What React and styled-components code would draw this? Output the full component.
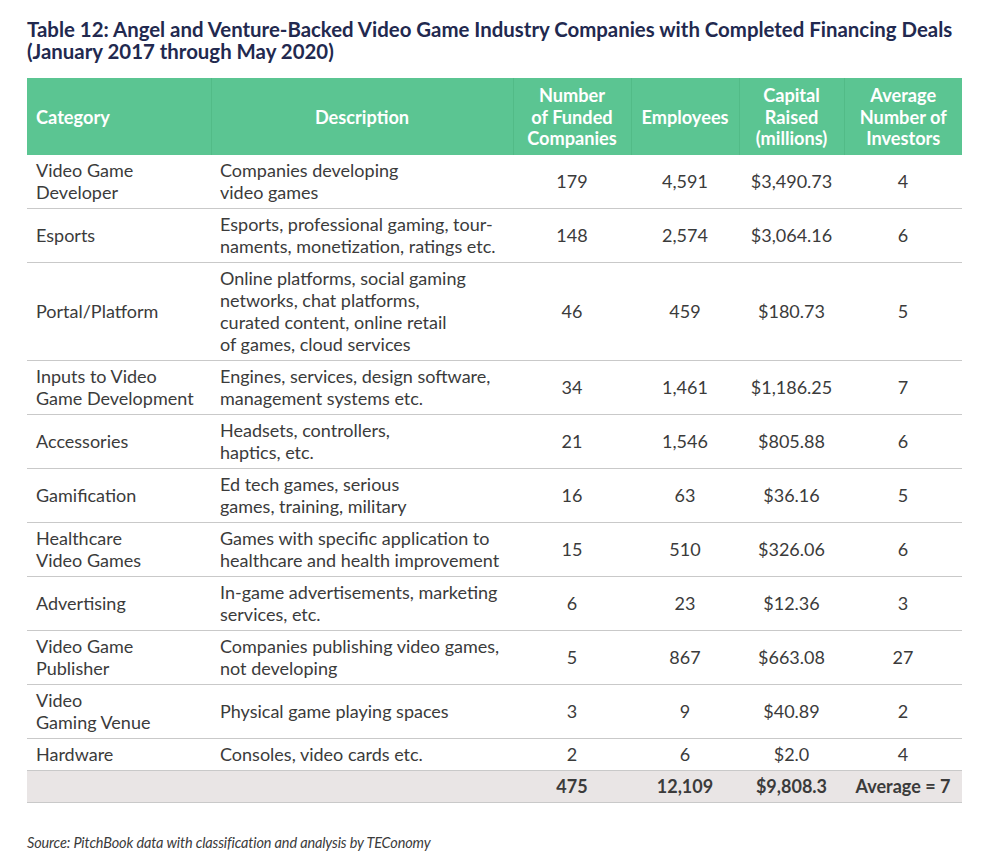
import React from "react";
import styled, { createGlobalStyle } from "styled-components";

const Global = createGlobalStyle`
  html, body { margin: 0; padding: 0; background: #ffffff; }
  body { font-family: Lato, "Open Sans", sans-serif; }
`;

const Page = styled.div`
  width: 1008px;
  height: 862px;
  box-sizing: border-box;
  padding: 18px 0 0 27px;
  background: #fff;
`;

const Title = styled.h1`
  margin: 0;
  font-family: Lato, sans-serif;
  font-weight: 700;
  font-size: 20.4px;
  line-height: 22px;
  color: #22294f;
`;

const Table = styled.table`
  margin-top: 16px;
  width: 935px;
  border-collapse: collapse;
  table-layout: fixed;
  font-family: Lato, sans-serif;
`;

const HeadCell = styled.th`
  background: #5bc592;
  color: #ffffff;
  font-weight: 700;
  font-size: 18.2px;
  line-height: 21.5px;
  padding: 7px 9px 5px;
  height: 76px;
  box-sizing: border-box;
  text-align: ${(p) => p.$align || "center"};
  border-left: ${(p) => (p.$first ? "none" : "1px solid #52bb87")};
  vertical-align: middle;
  white-space: nowrap;
`;

const Row = styled.tr`
  border-bottom: 1px solid #c9c9c9;
  background: ${(p) => (p.$total ? "#e9e5e5" : "#fff")};
`;

const Cell = styled.td`
  font-size: 18px;
  line-height: 22px;
  color: #3b3b3b;
  padding: 4.5px 9px;
  font-weight: ${(p) => (p.$bold ? 700 : 400)};
  text-align: ${(p) => (p.$center ? "center" : "left")};
  vertical-align: middle;
  white-space: nowrap;
`;

const Source = styled.p`
  margin: 31px 0 0 0;
  font-family: Lato, sans-serif;
  font-style: italic;
  font-size: 14.5px;
  color: #3b3b3b;
  letter-spacing: -0.15px;
`;

const rows = [
  [["Video Game", "Developer"], ["Companies developing", "video games"], "179", "4,591", "$3,490.73", "4"],
  [["Esports"], ["Esports, professional gaming, tour-", "naments, monetization, ratings etc."], "148", "2,574", "$3,064.16", "6"],
  [["Portal/Platform"], ["Online platforms, social gaming", "networks, chat platforms,", "curated content, online retail", "of games, cloud services"], "46", "459", "$180.73", "5"],
  [["Inputs to Video", "Game Development"], ["Engines, services, design software,", "management systems etc."], "34", "1,461", "$1,186.25", "7"],
  [["Accessories"], ["Headsets, controllers,", "haptics, etc."], "21", "1,546", "$805.88", "6"],
  [["Gamification"], ["Ed tech games, serious", "games, training, military"], "16", "63", "$36.16", "5"],
  [["Healthcare", "Video Games"], ["Games with specific application to", "healthcare and health improvement"], "15", "510", "$326.06", "6"],
  [["Advertising"], ["In-game advertisements, marketing", "services, etc."], "6", "23", "$12.36", "3"],
  [["Video Game", "Publisher"], ["Companies publishing video games,", "not developing"], "5", "867", "$663.08", "27"],
  [["Video", "Gaming Venue"], ["Physical game playing spaces"], "3", "9", "$40.89", "2"],
  [["Hardware"], ["Consoles, video cards etc."], "2", "6", "$2.0", "4"],
];

const Lines = ({ items }) =>
  items.map((t, i) => (
    <React.Fragment key={i}>
      {i > 0 && <br />}
      {t}
    </React.Fragment>
  ));

export default function App() {
  return (
    <Page>
      <Global />
      <Title>
        Table 12: Angel and Venture-Backed Video Game Industry Companies with Completed Financing Deals
        <br />
        (January 2017 through May 2020)
      </Title>
      <Table>
        <colgroup>
          <col style={{ width: 184 }} />
          <col style={{ width: 302 }} />
          <col style={{ width: 118 }} />
          <col style={{ width: 108 }} />
          <col style={{ width: 105 }} />
          <col style={{ width: 118 }} />
        </colgroup>
        <thead>
          <tr>
            <HeadCell $align="left" $first>Category</HeadCell>
            <HeadCell>Description</HeadCell>
            <HeadCell>Number<br />of Funded<br />Companies</HeadCell>
            <HeadCell>Employees</HeadCell>
            <HeadCell>Capital<br />Raised<br />(millions)</HeadCell>
            <HeadCell>Average<br />Number of<br />Investors</HeadCell>
          </tr>
        </thead>
        <tbody>
          {rows.map((r, i) => (
            <Row key={i}>
              <Cell><Lines items={r[0]} /></Cell>
              <Cell><Lines items={r[1]} /></Cell>
              <Cell $center>{r[2]}</Cell>
              <Cell $center>{r[3]}</Cell>
              <Cell $center>{r[4]}</Cell>
              <Cell $center>{r[5]}</Cell>
            </Row>
          ))}
          <Row $total>
            <Cell />
            <Cell />
            <Cell $center $bold>475</Cell>
            <Cell $center $bold>12,109</Cell>
            <Cell $center $bold>$9,808.3</Cell>
            <Cell $center $bold>Average = 7</Cell>
          </Row>
        </tbody>
      </Table>
      <Source>Source: PitchBook data with classification and analysis by TEConomy</Source>
    </Page>
  );
}
